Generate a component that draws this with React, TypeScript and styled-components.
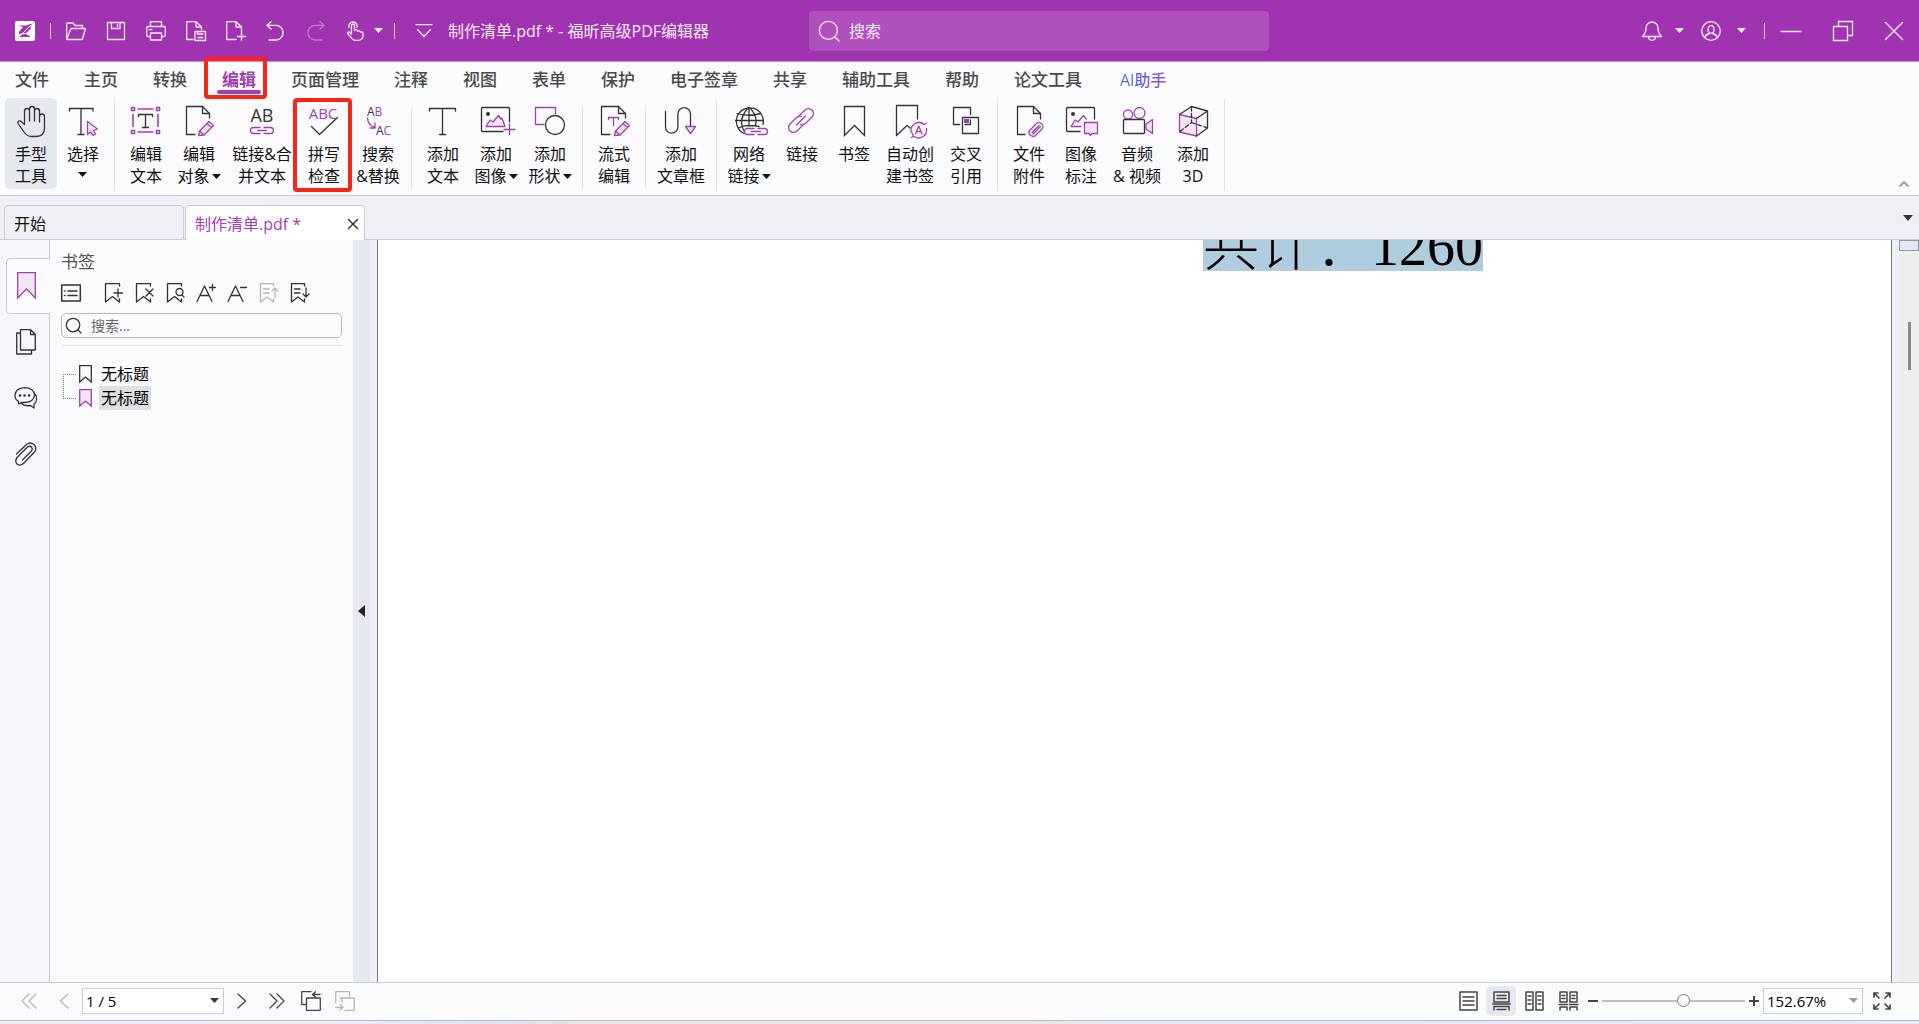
import React from 'react';
import styled, { createGlobalStyle, css } from 'styled-components';

const c = {
  purple: '#a033b0',
  accent: '#a03fae',
  tint: '#f4e4f6',
  ink: '#333333',
  line: '#c5cad6',
  surface: '#fbfbfe',
  strip: '#eff0f5',
  hover: '#e5e8ef',
  faded: '#b4b6bb',
  red: '#fb2315',
};

const GlobalStyle = createGlobalStyle`
  *, *::before, *::after { box-sizing: border-box; }
  body {
    margin: 0;
    font-family: "Open Sans", "Noto Sans CJK SC", sans-serif;
    font-size: 16px;
    line-height: 22px;
    color: #111;
  }
  button, input, select { font: inherit; color: inherit; margin: 0; padding: 0; }
  button { border: 0; background: none; cursor: pointer; }
`;

/* ---------- drawing helpers ---------- */

const Drawing = styled.svg`
  display: block;
  flex: none;
  overflow: visible;
  fill: none;
  stroke-width: 1.3;
  stroke-linejoin: round;
  stroke-linecap: round;
`;

type DrawProps = { w?: number; h?: number; color?: string; children: React.ReactNode };
const Draw = ({ w = 20, h = 20, color = 'currentColor', children }: DrawProps) => (
  <Drawing width={w} height={h} viewBox={`0 0 ${w} ${h}`} stroke={color} aria-hidden="true">
    {children}
  </Drawing>
);

const Caret = ({ w = 9, h = 5 }: { w?: number; h?: number }) => (
  <Draw w={w} h={h}>
    <path d={`M0 0H${w}L${w / 2} ${h}Z`} fill="currentColor" stroke="none" />
  </Draw>
);

/* ---------- shell ---------- */

const Shell = styled.div`
  display: flex;
  flex-direction: column;
  height: 100vh;
  background: ${c.surface};
`;

/* ---------- title bar ---------- */

const TitleBar = styled.header`
  display: flex;
  align-items: center;
  height: 62px;
  flex: none;
  background: ${c.purple};
  border-bottom: 1px solid #c98fd2;
  color: #f8e9fa;
`;

const QuickAccess = styled.div`
  display: flex;
  align-items: center;
  flex: 0 1 809px;
  white-space: nowrap;
`;

const BarButton = styled.button<{ $w?: number; $dim?: boolean }>`
  display: flex;
  align-items: center;
  justify-content: center;
  width: ${(p) => p.$w ?? 40}px;
  height: 40px;
  opacity: ${(p) => (p.$dim ? 0.4 : 1)};
`;

const BarRule = styled.span<{ $before?: number; $after?: number }>`
  width: 1px;
  height: 16px;
  margin: 0 ${(p) => p.$after ?? 0}px 0 ${(p) => p.$before ?? 0}px;
  background: #e3bfe8;
`;

const DocTitle = styled.h1`
  margin: 0 0 0 4px;
  font-size: 16px;
  font-weight: 400;
`;

const GlobalSearch = styled.label`
  display: flex;
  align-items: center;
  gap: 10px;
  flex: 0 1 460px;
  height: 40px;
  padding: 0 10px;
  border-radius: 4px;
  background: #b050bc;
  input {
    flex: 1;
    min-width: 0;
    border: 0;
    outline: 0;
    background: none;
  }
  input::placeholder { color: #f8e9fa; opacity: 1; }
`;

const WindowArea = styled.div`
  display: flex;
  align-items: center;
  margin-left: auto;
`;

const Lens = ({ size = 20 }: { size?: number }) => (
  <Draw w={size} h={size}>
    <circle cx={size * 0.47} cy={size * 0.47} r={size * 0.45} />
    <path d={`M${size * 0.8} ${size * 0.8}L${size} ${size}`} />
  </Draw>
);

const quickIcons: { name: string; dim?: boolean; art: React.ReactNode }[] = [
  {
    name: '打开',
    art: <path d="M.7 18V3Q.7 2 1.7 2H7L9 4.500H16.500V7M.7 18L5 7.500H19.500L16.500 18Q16.300 18.500 15.500 18.500H1" />,
  },
  { name: '保存', art: <path d="M1.500 1.500H18.500V18.500H1.500ZM5.500 1.500V7.500H14V1.500M11.500 3.500V5.500" /> },
  {
    name: '打印',
    art: <path d="M4.500 5.500V.700H15.500V5.500M4.500 15.500H2Q.700 15.500 .700 14V7Q.700 5.500 2 5.500H18Q19.300 5.500 19.300 7V14Q19.300 15.500 18 15.500H15.500M4.500 12H15.500V19H4.500ZM3 8.700H6" />,
  },
  {
    name: '另存为',
    art: <path d="M7 18.500H.700V.700H10L15.500 6V8.500M10 .700V6H15.500M9 10.500H19.500V19.500H9ZM11.500 10.500V13H17M12 16.500H16.500" />,
  },
  { name: '新建', art: <path d="M10 18.500H.700V.700H10L15.500 6V11M10 .700V6H15.500M15.500 11.500V19.500M11.500 15.500H19.500" /> },
  { name: '撤销', art: <path d="M5 .800L1 4.300L5 8M1 4.300H10.500A7.400 7.400 0 0 1 10.500 19H3" /> },
  { name: '恢复', dim: true, art: <path d="M14 .800L18 4.300L14 8M18 4.300H8.500A7.400 7.400 0 0 0 8.500 19H16" /> },
];

const Title = () => (
  <TitleBar>
    <QuickAccess>
      <BarButton $w={50} aria-label="福昕">
        <Draw>
          <rect width="20" height="20" rx="2" fill="#fff" stroke="none" />
          <path d="M3 4.500H11Q15 3 18 2.500Q14 6 16 7Q12 12 10 12.500L15 15V16H4L7 13Q3 14 4 11Q7 7 8 6Z" fill={c.purple} stroke="none" />
          <path d="M3 17L16 4M10 12.500L6 13" stroke="#fff" strokeWidth="1" />
        </Draw>
      </BarButton>
      <BarRule $after={5} />
      {quickIcons.map((q) => (
        <BarButton key={q.name} $dim={q.dim} aria-label={q.name}>
          <Draw>{q.art}</Draw>
        </BarButton>
      ))}
      <BarButton $w={38} aria-label="触摸模式">
        <Draw>
          <path d="M6.500 13V4.500A1.500 1.500 0 0 1 9.500 4.500V9.500M9.500 9Q12 8 12.500 10Q15 9.300 15.500 11Q18 10.500 18 12.500V15Q17.500 19.300 13 19.300H10Q8 19.300 6.500 17L2.700 12.500Q2.500 10.500 4.500 11L6.500 13M4 6.500A4.200 4.200 0 1 1 12 6.500" />
        </Draw>
      </BarButton>
      <BarButton $w={8} aria-label="更多"><Caret /></BarButton>
      <BarRule $before={12} $after={9} />
      <BarButton aria-label="自定义快速访问">
        <Draw w={16} h={14}><path d="M0 .700H16M1.500 5.500L8 12.500L14.500 5.500" /></Draw>
      </BarButton>
      <DocTitle>制作清单.pdf * - 福昕高级PDF编辑器</DocTitle>
    </QuickAccess>
    <GlobalSearch>
      <Lens />
      <input type="search" placeholder="搜索" aria-label="搜索" />
    </GlobalSearch>
    <WindowArea>
      <BarButton aria-label="通知">
        <Draw><path d="M.500 15.500Q4 12 4 8.500V7A6 6 0 0 1 16 7V8.500Q16 12 19.500 15.500ZM6.500 16Q7 19.300 10 19.300T13.500 16" /></Draw>
      </BarButton>
      <BarButton $w={14} aria-label="通知选项"><Caret /></BarButton>
      <BarButton $w={50} aria-label="账户">
        <Draw>
          <circle cx="10" cy="10" r="9.300" />
          <ellipse cx="10" cy="8.500" rx="3" ry="3.800" />
          <path d="M3.500 16.500Q5 13 8.500 12.500M16.500 16.500Q15 13 11.500 12.500" />
        </Draw>
      </BarButton>
      <BarButton $w={10} aria-label="账户选项"><Caret /></BarButton>
      <BarRule $before={18} />
      <BarButton $w={52} aria-label="最小化"><Draw><path d="M0 10.500H20" /></Draw></BarButton>
      <BarButton $w={52} aria-label="还原"><Draw><path d="M.500 5.500H14.500V19.500H.500ZM5.500 5.500V.500H19.500V14.500H14.500" strokeLinejoin="miter" /></Draw></BarButton>
      <BarButton $w={50} aria-label="关闭"><Draw w={18} h={18}><path d="M.500 .500L17.500 17.500M17.500 .500L.500 17.500" /></Draw></BarButton>
    </WindowArea>
  </TitleBar>
);

/* ---------- menu ---------- */

const Menu = styled.nav`
  display: flex;
  gap: 35px;
  height: 36px;
  padding: 0 15px;
  flex: none;
`;

const Marker = styled.span`
  position: absolute;
  z-index: 2;
  border: 4px solid ${c.red};
  border-radius: 4px;
  pointer-events: none;
`;

const MenuMarker = styled(Marker)`
  inset: -5px -11px -1px -18px;
`;

const MenuItem = styled.button<{ $active?: boolean; $ai?: boolean }>`
  position: relative;
  flex: none;
  height: 36px;
  font-size: 17px;
  font-weight: 500;
  color: #4a4a4a;
  ${(p) =>
    p.$active &&
    css`
      color: ${c.accent};
      font-weight: 700;
      &::after {
        content: '';
        position: absolute;
        inset: 28px -5px auto;
        height: 4px;
        border-radius: 2px;
        background: ${c.accent};
      }
    `}
  ${(p) =>
    p.$ai &&
    css`
      margin-left: 3px;
      font-size: 16px;
      background: linear-gradient(90deg, #3579df, #9a4cc6);
      background-clip: text;
      color: transparent;
    `}
`;

const menuItems = ['文件', '主页', '转换', '编辑', '页面管理', '注释', '视图', '表单', '保护', '电子签章', '共享', '辅助工具', '帮助', '论文工具', 'AI助手'];

/* ---------- ribbon ---------- */

const Ribbon = styled.div`
  display: flex;
  height: 98px;
  flex: none;
  padding-left: 5px;
  border-bottom: 1px solid ${c.line};
`;

const Tool = styled.button<{ $w: number; $active?: boolean }>`
  position: relative;
  display: flex;
  flex-direction: column;
  align-items: center;
  gap: 5px;
  flex: none;
  width: ${(p) => p.$w}px;
  height: 91px;
  padding-top: 6px;
  border-radius: 5px;
  background: ${(p) => (p.$active ? c.hover : 'none')};
  white-space: nowrap;
`;

const ToolLabel = styled.span`
  display: flex;
  flex-direction: column;
  align-items: center;
`;

const ToolLine = styled.span`
  display: flex;
  align-items: center;
  gap: 2px;
  min-height: 18px;
  line-height: 22px;
  color: #111;
`;

const ToolRule = styled.span<{ $short?: boolean }>`
  flex: none;
  width: 1px;
  height: ${(p) => (p.$short ? 81 : 92)}px;
  margin: ${(p) => (p.$short ? 9 : 1)}px 5px 0;
  background: #dfe1e9;
`;

const ToolMarker = styled(Marker)`
  inset: 0 -2px -3px -5px;
`;

const Collapse = styled.button`
  align-self: flex-end;
  display: flex;
  margin: 0 10px 6px auto;
  padding: 2px 0;
  color: #a5a5a5;
`;

const P = c.accent;
const K = c.ink;

const Pencil = ({ x = 0 }: { x?: number }) => (
  <path transform={`translate(${x} 0)`} d="M16.500 31.500L17.500 27L27 17.500L31.500 21.500L22 31L16.500 31.500ZM17.500 27L22 31M25 19.500L29.500 23.500" stroke={P} fill={c.tint} />
);
const Chain = ({ x, y }: { x: number; y: number }) => (
  <g transform={`translate(${x} ${y})`} stroke={P}>
    <path d="M10 .500H3.500A3 3 0 0 0 3.500 6.500H10M14 .500H20.500A3 3 0 0 1 20.500 6.500H14M7.500 3.500H16.500" />
  </g>
);
const BigT = () => <path d="M3.500 7V4.500H29.500V7M16.500 4.500V30.500M13.500 30.500H19.500" stroke={K} />;
const Hills = ({ fill = 'none' }: { fill?: string }) => (
  <path d="M7 22.500L11 16L14 18L19.500 11.500L22 15L23 14L26 22.500Z" stroke={P} fill={fill} />
);

type ToolDef = { lines: string[]; w?: number; caret?: boolean; active?: boolean; marked?: boolean; art: React.ReactNode };
type Entry = ToolDef | 'rule' | 'short';

const tools: Entry[] = [
  {
    lines: ['手型', '工具'],
    active: true,
    art: (
      <path stroke={K} d="M10.500 20V7A2.500 2.500 0 0 1 15.500 7V17M15.500 7V5A2.500 2.500 0 0 1 20.500 5V17M20.500 7A2.500 2.500 0 0 1 25.500 7V18M25.500 12.500A2.500 2.500 0 0 1 30.500 12.500V24Q30.500 32.500 22 32.500H18Q13 32.500 10 28L4 19.500Q3 16.500 6.500 17L10.500 20.500" />
    ),
  },
  {
    lines: ['选择', ''],
    caret: true,
    art: (
      <>
        <path d="M3.500 7V4.500H27V7M15 4.500V30.500M12 30.500H18" stroke={K} />
        <path d="M21.500 17.500V30.500L24.500 28L27 31.500L29.500 30L27.500 26.500L31.500 25Z" stroke={P} fill={c.tint} />
      </>
    ),
  },
  'rule',
  {
    lines: ['编辑', '文本'],
    art: (
      <>
        <path d="M2.500 3.500H5.500V6.500H2.500ZM27.500 3.500H30.500V6.500H27.500ZM2.500 26.500H5.500V29.500H2.500ZM27.500 26.500H30.500V29.500H27.500ZM8.500 5H24.500M8.500 28H24.500M4 10V23M29 10V23" stroke={P} strokeWidth="1.6" strokeLinecap="butt" />
        <path d="M9.500 12.500V10.500H23.500V12.500M16.500 10.500V23.500M13.500 23.500H19.500" stroke={K} />
      </>
    ),
  },
  {
    lines: ['编辑', '对象'],
    w: 54,
    caret: true,
    art: (
      <>
        <path d="M13 30.500H4.500V2.500H20.500L27.500 9.500V14M20.500 2.500V9.500H27.500" stroke={K} />
        <Pencil />
      </>
    ),
  },
  {
    lines: ['链接&合', '并文本'],
    w: 72,
    art: (
      <>
        <text x="17" y="18" textAnchor="middle" fontSize="18" fill={K} stroke="none">AB</text>
        <Chain x={5} y={23} />
      </>
    ),
  },
  {
    lines: ['拼写', '检查'],
    marked: true,
    art: (
      <>
        <text x="16" y="15" textAnchor="middle" fontSize="15" fill={P} stroke="none">ABC</text>
        <path d="M4.500 22.500L12.500 30.500L30.500 13.500" stroke={K} />
      </>
    ),
  },
  {
    lines: ['搜索', '&替换'],
    w: 56,
    art: (
      <>
        <text x="6" y="12" fontSize="12" fill={K} stroke="none">A<tspan fill={P}>B</tspan></text>
        <text x="15" y="31" fontSize="12" fill={K} stroke="none">A<tspan fill={P}>C</tspan></text>
        <path d="M6.500 14Q6.500 21 14 23.500M14 19V24H9" stroke={P} />
      </>
    ),
  },
  'short',
  { lines: ['添加', '文本'], art: <BigT /> },
  {
    lines: ['添加', '图像'],
    w: 54,
    caret: true,
    art: (
      <>
        <path d="M24 27.500H3.500Q2.500 27.500 2.500 26.500V4.500Q2.500 3.500 3.500 3.500H29.500Q30.500 3.500 30.500 4.500V18" stroke={K} />
        <circle cx="9" cy="10" r="2" fill={K} stroke="none" />
        <Hills fill={c.tint} />
        <path d="M30.500 20V30.500M25 25.500H36" stroke={P} />
      </>
    ),
  },
  {
    lines: ['添加', '形状'],
    w: 54,
    caret: true,
    art: (
      <>
        <path d="M11 20.500H2.500V3.500H22.500V10" stroke={P} />
        <circle cx="22" cy="21" r="9.500" stroke={K} />
      </>
    ),
  },
  'short',
  {
    lines: ['流式', '编辑'],
    w: 52,
    art: (
      <>
        <path d="M13 30.500H4.500V2.500H21.500L28.500 9.500V14M21.500 2.500V9.500H28.500" stroke={K} />
        <path d="M11.500 15.500V13.500H21.500V15.500M16.500 13.500V21.500" stroke={P} />
        <Pencil x={1} />
      </>
    ),
  },
  'short',
  {
    lines: ['添加', '文章框'],
    w: 60,
    art: (
      <>
        <path d="M1.500 7.500V23A6.200 6.200 0 0 0 13.900 23V10A6.200 6.200 0 0 1 26.500 10V22" stroke={K} />
        <path d="M21.500 22.500H31.500L26.500 29.500Z" stroke={P} fill={c.tint} />
      </>
    ),
  },
  'rule',
  {
    lines: ['网络', '链接'],
    w: 54,
    caret: true,
    art: (
      <>
        <path d="M12 29.500A13.500 13.500 0 1 1 31 20.500M17 3.500V22M5 9.500Q16.500 13 29 9.500M3.500 16.500H30.500M6 24Q11 21.500 17 21.500Q23 21.500 27 22.500M16.500 3.500Q5 16 12.500 28M17.500 3.500Q26 12 23.500 21" stroke={K} />
        <Chain x={12} y={24} />
      </>
    ),
  },
  {
    lines: ['链接'],
    art: (
      <path stroke={P} d="M13 13L20 6A4.900 4.900 0 0 1 27 13L20.500 19.500Q17.500 21.500 15.500 20.500M19 20L12 27A4.900 4.900 0 0 1 5 20L11.500 13.500Q14 11.500 16.500 12.500M11.500 21L20.500 12" />
    ),
  },
  { lines: ['书签'], art: <path d="M7.500 2.500H27.500V31.500L17.500 21.500L7.500 31.500Z" stroke={K} strokeLinejoin="miter" /> },
  {
    lines: ['自动创', '建书签'],
    w: 60,
    art: (
      <>
        <path d="M24.500 15V1.500H3.500V31.500L14 21.500L17 24" stroke={K} />
        <path d="M18 28A8 8 0 0 1 31 20.500M33.500 24.500A8 8 0 0 1 20.500 32M33.500 19L31 20.500L28.500 18.500M18.500 33.500L20.500 32L19 29M22.500 30L25.800 22L29 30M23.500 27.500H28" stroke={P} />
      </>
    ),
  },
  {
    lines: ['交叉', '引用'],
    art: (
      <>
        <path d="M10.500 20.500H4.500V3.500H21.500V10.500M13.500 13.500H29.500V29.500H13.500ZM16 20.500H21.500V16" stroke={K} />
        <rect x="15" y="15" width="5" height="4" fill={P} stroke="none" />
      </>
    ),
  },
  'rule',
  {
    lines: ['文件', '附件'],
    art: (
      <>
        <path d="M13 30.500H5.500V2.500H21.500L28.500 9.500V15M21.500 2.500V9.500H28.500" stroke={K} />
        <path d="M17 27L24 20A3.800 3.800 0 0 1 30 25L24 31A4 4 0 0 1 17.500 26.500M20 28.500L27 21.500M21 30L28.500 22.500" stroke={P} />
      </>
    ),
  },
  {
    lines: ['图像', '标注'],
    art: (
      <>
        <path d="M16 27.500H3.500Q2.500 27.500 2.500 26.500V4.500Q2.500 3.500 3.500 3.500H29.500Q30.500 3.500 30.500 4.500V15" stroke={K} />
        <circle cx="9" cy="10" r="2" fill={K} stroke="none" />
        <path d="M17 22.500H7L11 16L14 18L19.500 11.500L22.500 15" stroke={P} />
        <path d="M20.500 18.500H33.500V29.500H28L26.500 31.500L25 29.500H20.500Z" stroke={P} fill={c.tint} />
      </>
    ),
  },
  {
    lines: ['音频', '& 视频'],
    w: 60,
    art: (
      <>
        <circle cx="8" cy="10.500" r="4.500" stroke={P} />
        <circle cx="19.500" cy="9" r="5.500" stroke={P} />
        <rect x="3.500" y="15.500" width="21" height="14" rx="1" stroke={K} />
        <path d="M26 20L32.500 15.500V29.500L26 25Z" stroke={P} fill={c.tint} />
      </>
    ),
  },
  {
    lines: ['添加', '3D'],
    art: (
      <>
        <path d="M3.500 10.500L20.500 14.500V32L3.500 28Z" fill={c.tint} stroke={P} />
        <path d="M3.500 10.500L15.500 2.500L31.500 7L20.500 14.500M31.500 7V24L20.500 32" stroke={K} />
        <path d="M15.500 3V18.500L3.500 28M15.500 18.500L31.500 24" stroke={K} strokeDasharray="4 2.500" />
      </>
    ),
  },
  'rule',
];

const RibbonBar = () => (
  <Ribbon role="toolbar" aria-label="编辑">
    {tools.map((t, i) => {
      if (typeof t === 'string') return <ToolRule key={i} $short={t === 'short'} />;
      const last = t.lines.length - 1;
      return (
        <Tool key={i} $w={t.w ?? 52} $active={t.active}>
          <Draw w={34} h={34}>{t.art}</Draw>
          <ToolLabel>
            {t.lines.map((line, n) => (
              <ToolLine key={n}>
                {line}
                {t.caret && n === last && <Caret />}
              </ToolLine>
            ))}
          </ToolLabel>
          {t.marked && <ToolMarker />}
        </Tool>
      );
    })}
    <Collapse aria-label="折叠功能区">
      <Draw w={10} h={6}><path d="M1 5L5 1L9 5" strokeWidth="2" /></Draw>
    </Collapse>
  </Ribbon>
);

/* ---------- document tabs ---------- */

const TabStrip = styled.div`
  display: flex;
  align-items: flex-end;
  gap: 1px;
  height: 44px;
  flex: none;
  padding: 0 6px 0 4px;
  background: ${c.strip};
  box-shadow: inset 0 -1px ${c.line};
`;

const Tab = styled.div<{ $active?: boolean }>`
  display: flex;
  align-items: center;
  justify-content: space-between;
  width: 180px;
  height: 35px;
  padding: 2px 6px 0 9px;
  border: 1px solid ${c.line};
  border-bottom: ${(p) => (p.$active ? '0' : `1px solid ${c.line}`)};
  border-radius: 4px 4px 0 0;
  background: ${(p) => (p.$active ? '#fff' : c.strip)};
  color: ${(p) => (p.$active ? c.accent : '#111')};
`;

const CloseTab = styled.button`
  display: flex;
  color: ${c.ink};
`;

const TabMenu = styled.button`
  display: flex;
  align-self: center;
  margin-left: auto;
  color: ${c.ink};
`;

/* ---------- workspace ---------- */

const Workspace = styled.main`
  display: flex;
  flex: 1;
  min-height: 0;
`;

const NavRail = styled.nav`
  display: flex;
  flex-direction: column;
  flex: none;
  width: 50px;
  padding: 18px 0 0 6px;
  background: #f4f6fb;
  box-shadow: inset -1px 0 ${c.line};
`;

const RailButton = styled.button<{ $active?: boolean }>`
  display: flex;
  align-items: center;
  justify-content: center;
  height: 56px;
  padding: 0 4px 1px 0;
  color: ${c.ink};
  ${(p) =>
    p.$active &&
    css`
      border: 1px solid ${c.line};
      border-right: 0;
      border-radius: 5px 0 0 5px;
      background: ${c.surface};
      color: ${c.accent};
    `}
`;

const Panel = styled.section`
  flex: none;
  width: 303px;
  padding: 11px 10px 0 11px;
`;

const PanelTitle = styled.h2`
  margin: 0;
  font-size: 17px;
  font-weight: 400;
  color: #555;
`;

const PanelTools = styled.div`
  display: flex;
  align-items: center;
  gap: 11px;
  height: 40px;
  color: ${c.ink};
`;

const PanelTool = styled.button<{ $lead?: boolean; $dim?: boolean }>`
  display: flex;
  margin-right: ${(p) => (p.$lead ? 12 : 0)}px;
  color: ${(p) => (p.$dim ? c.faded : c.ink)};
`;

const PanelSearch = styled.label`
  display: flex;
  align-items: center;
  gap: 10px;
  width: 281px;
  height: 25px;
  padding: 0 4px;
  border: 1px solid #b7bac6;
  border-radius: 5px;
  color: ${c.ink};
  input {
    flex: 1;
    min-width: 0;
    border: 0;
    outline: 0;
    background: none;
    font-size: 14px;
  }
  input::placeholder { color: #666; opacity: 1; }
`;

const PanelRule = styled.hr`
  margin: 7px 0 16px;
  border: 0;
  border-top: 1px solid #e2e3e8;
`;

const Tree = styled.ul`
  position: relative;
  margin: 0;
  padding: 0 0 0 18px;
  list-style: none;
  &::before {
    content: '';
    position: absolute;
    left: 2px;
    top: 12px;
    width: 13px;
    height: 25px;
    border: 1px dotted #888;
    border-right: 0;
  }
`;

const TreeItem = styled.li<{ $selected?: boolean }>`
  display: flex;
  align-items: center;
  gap: 7px;
  height: 24px;
  color: ${(p) => (p.$selected ? c.accent : c.ink)};
  span {
    padding: 0 2px;
    line-height: 24px;
    color: #000;
    background: ${(p) => (p.$selected ? '#dfdfdf' : 'none')};
  }
`;

const Splitter = styled.button`
  display: flex;
  align-items: center;
  justify-content: center;
  flex: none;
  width: 17px;
  background: #e5e8f1;
  color: #222;
`;

const Canvas = styled.div`
  display: flex;
  flex: 1;
  min-width: 0;
  padding: 0 7px;
  background: ${c.strip};
`;

const Page = styled.article`
  flex: 1;
  overflow: hidden;
  padding-left: 825px;
  background: #fff;
  border: solid #777;
  border-width: 0 1px;
`;

const Selected = styled.mark`
  display: block;
  width: max-content;
  margin-top: -19px;
  background: #b0cde0;
  color: #000;
  font-family: "Liberation Serif", "Noto Sans CJK SC", serif;
  font-size: 56px;
  font-weight: 300;
  line-height: 50px;
  white-space: nowrap;
`;

const ScrollBar = styled.div`
  display: flex;
  flex-direction: column;
  align-items: center;
  flex: none;
  width: 20px;
  background: #eeeeee;
`;

const ScrollCap = styled.button`
  align-self: stretch;
  height: 11px;
  border: 1px solid #9096a6;
  background: #e4e8f2;
`;

const ScrollThumb = styled.span`
  width: 3px;
  height: 48px;
  margin-top: 71px;
  background: #888b8a;
`;

const BookmarkShape = ({ w, h, notch, filled }: { w: number; h: number; notch: number; filled?: boolean }) => (
  <Draw w={w} h={h}>
    <path d={`M.700 .700H${w - 0.7}V${h - 1}L${w / 2} ${h - notch}L.700 ${h - 1}Z`} fill={filled ? c.tint : 'none'} strokeLinejoin="miter" />
  </Draw>
);

const panelTools: { name: string; lead?: boolean; dim?: boolean; art: React.ReactNode }[] = [
  { name: '选项', lead: true, art: <path d="M.700 2H19.300V18H.700ZM7 8H16M7 12.500H16M3.500 8H4M3.500 12.500H4" strokeWidth="1.500" /> },
  { name: '添加书签', art: <path d="M15.500 3V.700H1.500V19L8.500 13.500L15.500 19V16M14 6V14M10 10H18.500" /> },
  { name: '删除书签', art: <path d="M15.500 3V.700H1.500V19L8.500 13.500L15.500 19V16M11 6L18 13M18 6L11 13" /> },
  { name: '查找书签', art: <><path d="M15.500 3V.700H1.500V19L8.500 13.500L15.500 19V16" /><circle cx="13.500" cy="9" r="3.500" /><path d="M16 12L18 14" /></> },
  { name: '增大字体', art: <path d="M0 18.500L7.500 3L15 18.500M3 12.500H12M15.500 1.500V7.500M12.500 4.500H18.500" /> },
  { name: '减小字体', art: <path d="M0 18.500L7.500 3L15 18.500M3 12.500H12M12.500 4.500H18.500" /> },
  { name: '上移', dim: true, art: <path d="M14.500 3V.700H1.500V19L8 14L14.500 19V16M4.500 6H10M4.500 10H10M16 14V5M13 8L16 5L19 8" /> },
  { name: '下移', art: <path d="M14.500 3V.700H1.500V19L8 14L14.500 19V16M4.500 6H10M4.500 10H10M16 5V14M13 11L16 14L19 11" /> },
];

/* ---------- status bar ---------- */

const StatusBar = styled.footer`
  display: flex;
  align-items: center;
  height: 38px;
  flex: none;
  padding: 0 19px 2px 12px;
  border-top: 1px solid ${c.line};
`;

const StatusButton = styled.button<{ $w?: number; $active?: boolean; $dim?: boolean; $end?: boolean }>`
  display: flex;
  align-items: center;
  justify-content: center;
  flex: none;
  width: ${(p) => p.$w ?? 34}px;
  height: 30px;
  margin-left: ${(p) => (p.$end ? 'auto' : '0')};
  border-radius: 5px;
  background: ${(p) => (p.$active ? c.hover : 'none')};
  color: ${(p) => (p.$dim ? c.faded : '#444')};
`;

const Combo = styled.label<{ $w: number; $muted?: boolean }>`
  display: grid;
  align-items: center;
  flex: none;
  width: ${(p) => p.$w}px;
  height: 26px;
  border: 1px solid ${c.line};
  background: #fff;
  color: ${(p) => (p.$muted ? '#999' : c.ink)};
  select, svg { grid-area: 1 / 1; }
  select {
    appearance: none;
    width: 100%;
    height: 24px;
    padding: 0 3px;
    border: 0;
    background: none;
    color: #000;
    font-size: 15px;
  }
  svg { justify-self: end; margin-right: 4px; pointer-events: none; }
`;

const ZoomSlider = styled.input`
  appearance: none;
  width: 143px;
  height: 14px;
  background: linear-gradient(#bdbec2, #bdbec2) center / 100% 2px no-repeat;
  &::-webkit-slider-thumb {
    appearance: none;
    width: 13px;
    height: 13px;
    border: 1px solid #777;
    border-radius: 50%;
    background: #fff;
  }
`;

const DesktopEdge = styled.div`
  height: 4px;
  flex: none;
  border-top: 1px solid #b9bcc6;
  background: linear-gradient(90deg, #ebebf4 18%, #d9e4f0 25%, #eee0e4 31%, #efe2d8 52%, #e3e7f2 58%, #e6eaf5);
`;

const pageLines = 'M4 6H15M4 10H15M4 14H15';

const Status = () => (
  <StatusBar>
    <StatusButton aria-label="首页" $dim><Draw w={16} h={16}><path d="M8 1L1 8L8 15M15 1L8 8L15 15" /></Draw></StatusButton>
    <StatusButton aria-label="上一页" $dim $w={36}><Draw w={10} h={16}><path d="M9 1L1.500 8L9 15" /></Draw></StatusButton>
    <Combo $w={142}>
      <select aria-label="页码"><option>1 / 5</option></select>
      <Caret />
    </Combo>
    <StatusButton aria-label="下一页" $w={36}><Draw w={10} h={16}><path d="M1 1L8.500 8L1 15" /></Draw></StatusButton>
    <StatusButton aria-label="末页"><Draw w={16} h={16}><path d="M1 1L8 8L1 15M8 1L15 8L8 15" /></Draw></StatusButton>
    <StatusButton aria-label="上一视图">
      <Draw><path d="M5 13.500H.700V.700H10M5.500 7H19.300V19.300H5.500ZM11.500 3.500H19M14.500 .700L11.500 3.500L14.500 6" /></Draw>
    </StatusButton>
    <StatusButton aria-label="下一视图" $dim>
      <Draw><path d="M.700 12V.700H14.500V5M5 7H19.300V19.300H10M7 11V7M.700 16.500H8M5 13.500L8 16.500L5 19.300" /></Draw>
    </StatusButton>

    <StatusButton $end $w={36} aria-label="单页"><Draw w={19}><path d={`M1 1H18V19H1Z${pageLines}`} strokeWidth="1.500" /></Draw></StatusButton>
    <StatusButton $active $w={30} aria-label="连续"><Draw w={19}><path d="M2 1H17V11H2ZM5 4.500H14M5 7.500H14M.700 13H18.300M2 19V15.500H17V19M5 18.500H14" strokeWidth="1.500" /></Draw></StatusButton>
    <StatusButton $w={36} aria-label="双页"><Draw w={19}><path d="M1 1H8V19H1ZM11 1H18V19H11ZM3 5H6M3 9H6M3 13H6M13 5H16M13 9H16M13 13H16" strokeWidth="1.500" /></Draw></StatusButton>
    <StatusButton $w={32} aria-label="双页连续"><Draw w={19}><path d="M1 1H8V11H1ZM11 1H18V11H11ZM3 4.500H6M3 7.500H6M13 4.500H16M13 7.500H16M0 13.500H8.500M10.500 13.500H19M1 19V16H8V19M11 19V16H18V19" strokeWidth="1.500" /></Draw></StatusButton>
    <StatusButton $w={18} aria-label="缩小"><Draw w={10} h={10}><path d="M0 5H10" strokeWidth="2" strokeLinecap="butt" /></Draw></StatusButton>
    <ZoomSlider type="range" min="0" max="100" defaultValue="58" aria-label="缩放" />
    <StatusButton $w={18} aria-label="放大"><Draw w={10} h={10}><path d="M0 5H10M5 0V10" strokeWidth="2" strokeLinecap="butt" /></Draw></StatusButton>
    <Combo $w={100} $muted>
      <select aria-label="缩放比例"><option>152.67%</option></select>
      <Caret />
    </Combo>
    <StatusButton $w={37} aria-label="全屏">
      <Draw w={18} h={18}><path d="M6 6L1 1M1 5V1H5M12 6L17 1M13 1H17V5M6 12L1 17M1 13V17H5M12 12L17 17M17 13V17H13" strokeWidth="1.700" /></Draw>
    </StatusButton>
  </StatusBar>
);

export default function App() {
  return (
    <Shell>
      <GlobalStyle />
      <Title />
      <Menu>
        {menuItems.map((m) => (
          <MenuItem key={m} $active={m === '编辑'} $ai={m === 'AI助手'}>
            {m}
            {m === '编辑' && <MenuMarker />}
          </MenuItem>
        ))}
      </Menu>
      <RibbonBar />
      <TabStrip>
        <Tab>开始</Tab>
        <Tab $active>
          制作清单.pdf *
          <CloseTab aria-label="关闭标签"><Draw w={10} h={10}><path d="M.500 .500L9.500 9.500M9.500 .500L.500 9.500" strokeWidth="1.500" /></Draw></CloseTab>
        </Tab>
        <TabMenu aria-label="标签列表"><Caret w={10} h={6} /></TabMenu>
      </TabStrip>
      <Workspace>
        <NavRail>
          <RailButton $active aria-label="书签"><BookmarkShape w={19} h={27} notch={10} filled /></RailButton>
          <RailButton aria-label="页面">
            <Draw w={20} h={26}><path d="M4.500 .700H14.500L19.300 5.500V21H4.500ZM14.500 .700V5.500H19.300M4.500 4H.700V25H15.500V21" /></Draw>
          </RailButton>
          <RailButton aria-label="注释">
            <Draw w={24} h={22}>
              <path d="M4.500 17V14.500Q1 12.500 1 8.500Q1.500 1 10.500 .700Q20 1 20.500 8Q20 15 11 15.500Q9 15.500 8 15.300ZM21.500 7.500Q23 9 22.500 13Q22 16 20 17V21L16.500 18.500Q10 19.500 7.500 16.500" />
              <path d="M6 8.500H6.100M10.500 8.500H10.600M15 8.500H15.100" strokeWidth="2.500" />
            </Draw>
          </RailButton>
          <RailButton aria-label="附件">
            <Draw w={22} h={24}><path d="M1.500 12L11.500 2.500Q15 -.500 19 2.500Q22.500 6 19.500 10L8.500 21.500Q5 24.500 2 22Q-.500 19 2 15.500L12.500 5Q15 3.500 16.500 5Q18 7 16.500 9L7.500 18" /></Draw>
          </RailButton>
        </NavRail>
        <Panel>
          <PanelTitle>书签</PanelTitle>
          <PanelTools>
            {panelTools.map((t) => (
              <PanelTool key={t.name} $lead={t.lead} $dim={t.dim} aria-label={t.name}><Draw>{t.art}</Draw></PanelTool>
            ))}
          </PanelTools>
          <PanelSearch>
            <Lens size={15} />
            <input type="search" placeholder="搜索..." aria-label="搜索书签" />
          </PanelSearch>
          <PanelRule />
          <Tree>
            <TreeItem><BookmarkShape w={13} h={18} notch={6} /><span>无标题</span></TreeItem>
            <TreeItem $selected><BookmarkShape w={13} h={18} notch={6} filled /><span>无标题</span></TreeItem>
          </Tree>
        </Panel>
        <Splitter aria-label="折叠面板">
          <Draw w={7} h={12}><path d="M7 0V12L0 6Z" fill="currentColor" stroke="none" /></Draw>
        </Splitter>
        <Canvas>
          <Page><Selected>共计：1260</Selected></Page>
        </Canvas>
        <ScrollBar>
          <ScrollCap aria-label="拆分视图" />
          <ScrollThumb />
        </ScrollBar>
      </Workspace>
      <Status />
      <DesktopEdge />
    </Shell>
  );
}
